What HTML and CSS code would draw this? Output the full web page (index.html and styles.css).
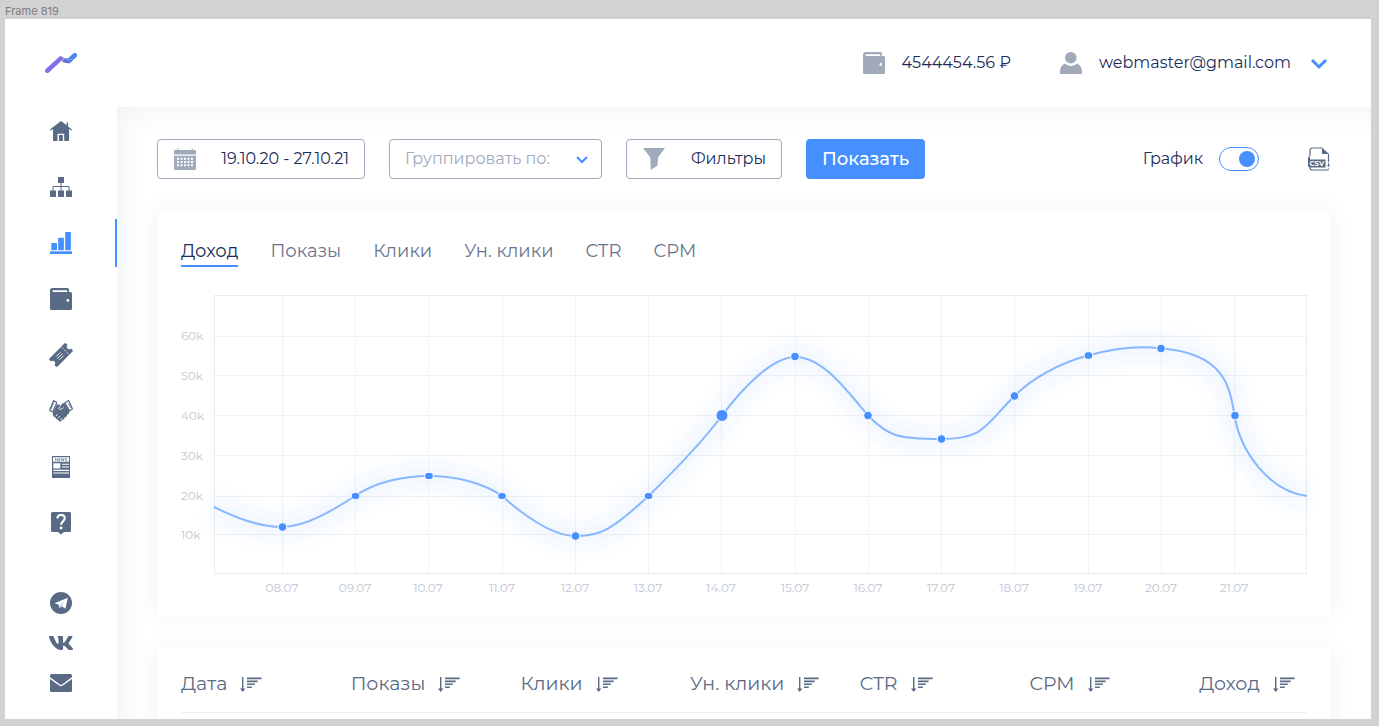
FILE: index.html
```
<!DOCTYPE html>
<html lang="ru">
<head>
<meta charset="utf-8">
<meta name="viewport" content="width=device-width, initial-scale=1">
<title>Статистика</title>
<link rel="stylesheet" href="styles.css">
</head>
<body class="canvas">
<svg class="sprite" aria-hidden="true">
  <symbol id="wallet" viewBox="0 0 24 24"><path fill-rule="evenodd" d="M3.500 1H18.500a1.500 1.500 0 0 1 1.500 1.500V5h1.500A1.500 1.500 0 0 1 23 6.500v15a1.500 1.500 0 0 1-1.500 1.500h-19A1.500 1.500 0 0 1 1 21.500v-18A2.500 2.500 0 0 1 3.500 1zM4.200 3.300a.8.8 0 0 0 0 1.600H18.300V3.300zM18.800 12a1.400 1.400 0 1 0 0 2.800 1.400 1.400 0 0 0 0-2.800z"/></symbol>
  <symbol id="sort" viewBox="0 0 22 15"><path d="M2.700 0v12" fill="none" stroke="currentColor" stroke-width="1.400"/><path d="M0 11.500h5.400L2.700 15z"/><path d="M7 .5h15l-.8 1.800H7zM7 3.600h11l-.8 1.600H7zM7 6.500h8.200l-.8 1.600H7zM7 9.400h5.300l-.8 1.500H7z"/></symbol>
</svg>
<div class="frame-label">Frame 819</div>
<div class="frame">
  <aside class="sidebar">
    <a class="logo" href="#" aria-label="Главная страница">
      <svg width="32" height="20" viewBox="0 0 32 20" fill="none" stroke-linecap="round">
        <path d="M15 3.300l5 2 4.500.2 3.500 1.300-3.600 3.600-5.600-.9-3.800-3z" fill="#5a70d8"/>
        <path d="M2.300 17.700 15.500 5.600" stroke="#8470e6" stroke-width="4.600"/>
        <path d="M24.500 7.200 29.800 2.300" stroke="#4b87e8" stroke-width="4.600"/>
        <path d="M17 8.300l2.800-4.200" stroke="#fff" stroke-width=".6"/>
        <path d="M20.500 6.200 27 6.500" stroke="#a9b7f0" stroke-width=".6"/>
      </svg>
    </a>
    <nav class="nav" aria-label="Разделы">
      <a class="nav-link" href="#" aria-label="Главная"><svg class="icon" viewBox="0 0 24 24"><path d="M12 2 1 10.500l.7 1L4 10v12h4.500v-7.300h6.700V22H20V10l2.300 1.500.7-1-3.900-3V3.500h-1.400v2.800zM10 16h3.800v6H10z"/></svg></a>
      <a class="nav-link" href="#" aria-label="Структура"><svg class="icon" viewBox="0 0 24 24"><path d="M9 2h6v6H9zM1 15.500h6V22H1zM9 15.500h6V22H9zM17 15.500h6V22h-6z"/><path d="M12 8v8M4 16v-4.500h16V16" fill="none" stroke="currentColor"/></svg></a>
      <a class="nav-link nav-link-active" href="#" aria-label="Статистика" aria-current="page"><svg class="icon" viewBox="0 0 24 24"><rect x="2.300" y="12" width="5.700" height="7.200" rx=".8"/><rect x="9.200" y="6.700" width="5.700" height="12.500" rx=".8"/><rect x="16.200" y="1" width="5.700" height="18.200" rx=".8"/><path d="M1 20.300h22V23H1z"/></svg></a>
      <a class="nav-link" href="#" aria-label="Кошелёк"><svg class="icon"><use href="#wallet"/></svg></a>
      <a class="nav-link" href="#" aria-label="Купоны"><svg class="icon" viewBox="0 0 24 24"><g transform="rotate(-45 12 12)"><path d="M0 6.300h22.500q1.200 0 1.200 1.200v2.100a2.400 2.400 0 0 0 0 4.800v2.100q0 1.200-1.200 1.200H1.500q-1.200 0-1.200-1.200v-2.100a2.400 2.400 0 0 0 0-4.800V7.500q0-1.200 1.200-1.200z"/><path d="M18 7v2m0 1.500v2.200m0 1.500v2.500M7.500 9.700h6M6.500 12h7.500M7.500 14.300h6" stroke="#fff" fill="none" stroke-width=".8"/></g></svg></a>
      <a class="nav-link" href="#" aria-label="Партнёры"><svg class="icon" viewBox="0 0 24 24"><path d="M8.300 4.400 12.500 3.500l3.200.7 4.900 8-.9 2.700-1.500.7-.5 2-1.900.7-.7 1.900-2 .5-.8 1.600-2 .1-2-2.100-1.300-.5-1-1.800-1.500-.4-.7-2L4 13.200z"/><path d="M4.500 1.600 8 3.500 3.500 13 .6 11.500zM15.900 3.800l3.700-2.300 3.800 8.200-2.800 2.200z" fill="#fff" stroke="currentColor" stroke-width="1.200" stroke-linejoin="round"/><path d="M4.900 3.600 1.900 10.300M19.500 4l2.400 5" fill="none" stroke="currentColor" stroke-width=".8"/><path d="M8 3.800 11.500 3.200 15.500 3.500 12.400 5.300 11.700 6 8 5.300z" fill="#fff"/><path d="M12.200 5.800 9.500 9.400l1 1 2.800-.7 1.500-1.300M7 17l1.500-2M9.200 19.200l1.700-2.200M11.500 21.200l1.500-2.200" fill="none" stroke="#fff" stroke-width=".8"/></svg></a>
      <a class="nav-link" href="#" aria-label="Новости"><svg class="icon" viewBox="0 0 24 24"><path d="M3 1h18v22H3z"/><path d="M4 2.300h16v4.500H4zM4.300 8.200h7v5.300h-7zM13 8.800h7v1h-7zM13 11.500h7v1h-7zM4.300 14.800H20v1.200H4.300zM4.300 17.400H20v1.200H4.300z" fill="#fff"/><path d="M6.500 6V3.400L8.700 6V3.400M11.300 3.500H9.800v2.300h1.500M9.800 4.600h1.300M12.200 3.400l.7 2.400.8-2.400.7 2.400.7-2.400M17.700 3.500h-1.500v1.100h1.400v1.200h-1.500" fill="none" stroke="currentColor" stroke-width=".6"/></svg></a>
      <a class="nav-link" href="#" aria-label="Помощь"><svg class="icon" viewBox="0 0 24 24"><path d="M3.500 1h17Q22 1 22 2.500v17q0 1.500-1.500 1.500H15l-3 2.500L9 21H3.500Q2 21 2 19.500v-17Q2 1 3.500 1z"/><path d="M8.400 7.500c0-4.700 7.400-4.700 7.400-.4 0 3-3.700 3.200-3.700 6.700" fill="none" stroke="#fff" stroke-width="2.100"/><circle cx="12.100" cy="17" r="1.400" fill="#fff"/></svg></a>
    </nav>
    <div class="social">
      <a class="social-link" href="#" aria-label="Telegram"><svg class="icon" viewBox="0 0 24 24"><circle cx="12" cy="12" r="11"/><path d="M5.500 12.300 18.800 6.700 16.400 17.700 12.500 15.200 10.400 17 9.700 13.700z" fill="#fff"/><path d="M10.400 17l.2-2.700L16 9.200l-3.500 6z" fill="#cfd5de"/></svg></a>
      <a class="social-link" href="#" aria-label="VK"><svg class="icon" viewBox="18 -14 540 540"><path d="M545 117.700c3.700-12.500 0-21.700-17.800-21.700h-58.900c-15 0-21.900 7.900-25.600 16.700 0 0-30 73.100-72.400 120.500-13.700 13.700-20 18.100-27.500 18.100-3.700 0-9.400-4.400-9.400-16.900V117.700c0-15-4.200-21.700-16.600-21.700h-92.600c-9.400 0-15 7-15 13.500 0 14.200 21.200 17.500 23.400 57.500v86.800c0 19-3.400 22.500-10.900 22.500-20 0-68.600-73.400-97.400-157.400-5.800-16.300-11.500-22.900-26.600-22.900H38.800c-16.800 0-20.200 7.900-20.200 16.700 0 15.600 20 93.100 93.100 195.500C160.400 378.100 229 416 291.400 416c37.500 0 42.100-8.400 42.100-22.900 0-66.800-3.400-73.100 15.400-73.100 8.700 0 23.700 4.400 58.700 38.100 40 40 46.600 57.900 69 57.900h58.900c16.800 0 25.300-8.400 20.400-25-11.200-34.900-86.900-106.700-90.300-111.500-8.700-11.200-6.200-16.200 0-26.200.1-.1 72-101.300 79.400-135.600z"/></svg></a>
      <a class="social-link" href="#" aria-label="Почта"><svg class="icon" viewBox="0 0 24 24"><rect x="1" y="3" width="22" height="18" rx="1.500"/><path d="M.5 6.700 10.500 14q1.500 1 3 0l10-7.300" fill="none" stroke="#fff" stroke-width="1.500"/></svg></a>
    </div>
  </aside>

  <header class="topbar">
    <div class="balance"><svg class="icon icon-light"><use href="#wallet"/></svg><span>4544454.56 ₽</span></div>
    <button class="account" type="button">
      <svg class="icon icon-light" viewBox="0 0 24 24"><circle cx="11.800" cy="6.700" r="5.800"/><path d="M1 23v-2.500c0-4 2-6.700 5-8 3.200 3.300 8.600 3.300 11.800 0 3.200 1.300 5.200 4 5.200 8V23z"/></svg>
      <span>webmaster@gmail.com</span>
      <svg class="icon chevron" viewBox="0 0 24 24"><path d="M5 9l7 7 7-7" stroke-width="3"/></svg>
    </button>
  </header>

  <main class="content">
    <form class="filters">
      <button class="field field-date" type="button">
        <svg class="icon icon-light" viewBox="0 0 24 24"><path d="M4 1h1.500v2H4zM18.500 1H20v2h-1.500z" opacity=".6"/><path fill-rule="evenodd" d="M2 3h20q1 0 1 1v3.500H1V4q0-1 1-1zM1 8.700h22v12.800q0 1.500-1.500 1.500h-19Q1 23 1 21.500zM4 10.700v2h2v-2zm3.500 0v2h2v-2zm3.500 0v2h2v-2zm3.500 0v2h2v-2zm3.500 0v2h2v-2zM4 14v2h2v-2zm3.500 0v2h2v-2zm3.500 0v2h2v-2zm3.500 0v2h2v-2zm3.500 0v2h2v-2zM4 17.300v2h2v-2zm3.500 0v2h2v-2zm3.500 0v2h2v-2zm3.500 0v2h2v-2zm3.500 0v2h2v-2z"/></svg>
        <span>19.10.20 - 27.10.21</span>
      </button>
      <div class="select-wrap">
        <select class="field field-select" aria-label="Группировать по"><option>Группировать по:</option></select>
        <svg class="select-arrow chevron" width="12" height="8" viewBox="0 0 12 8"><path d="M1 1l5 5 5-5" stroke-width="2"/></svg>
      </div>
      <button class="field field-filter" type="button">
        <svg class="icon icon-light" viewBox="0 0 24 24"><path d="M1 1h22l-7 9.500-.5 8L8.700 23l-.4-12.500z"/></svg>
        <span>Фильтры</span>
      </button>
      <button class="submit" type="submit">Показать</button>
      <label class="switch">График<input class="switch-input" type="checkbox" role="switch" checked></label>
      <button class="export" type="button" aria-label="Скачать CSV">
        <svg class="icon" viewBox="0 0 24 24"><path d="M3 9V3.500Q3 1 5.500 1H15M21.500 7v8M3 19v1.500Q3 23 5.500 23H20q1.500 0 1.500-1.500" fill="none" stroke="currentColor" stroke-width="1.200"/><path d="M15 .5 22 7h-7zM1 10.500l2-1.500v3.500h15.500V20.500H3q-2 0-2-2z"/><path d="M21 16h1v2.300h1.200L21.500 20l-1.700-1.700H21z"/><text class="csv-text" x="9.800" y="19.300" text-anchor="middle">CSV</text></svg>
      </button>
    </form>

    <section class="card chart-card">
      <div class="tabs" role="tablist">
        <button class="tab tab-active" type="button" role="tab" aria-selected="true">Доход</button>
        <button class="tab" type="button" role="tab">Показы</button>
        <button class="tab" type="button" role="tab">Клики</button>
        <button class="tab" type="button" role="tab">Ун. клики</button>
        <button class="tab" type="button" role="tab">CTR</button>
        <button class="tab" type="button" role="tab">CPM</button>
      </div>
      <svg class="chart" viewBox="181 283 1126 309" role="img" aria-label="Доход по дням">
        <defs>
          <filter id="glow" x="-10%" y="-30%" width="120%" height="160%"><feGaussianBlur stdDeviation="8"/></filter>
          <path id="income" d="M214 507C236 518 260 527 282 527C306 527 335 509 355 496C375 482 403 476 429 476C458 476 485 484 502 496C522 514 552 536 575.500 536C600 536.500 613 529 648.500 496C672 473 704 440 722 415.500C742 389 772 357 795 357C822 357 845 388 868 415.500C888 436 897 439 941.500 439C985 439 985 425 1014.500 396C1032 378 1060 363 1088 355.500C1112 349 1136 345 1161 348.500C1225 353 1230 388 1234.500 415.500C1240 450 1268 491 1307 496"/>
        </defs>
        <path class="grid" d="M214 336.500H1306M214 375.500H1306M214 415.500H1306M214 455.500H1306M214 496.500H1306M214 534.500H1306M282.500 295V574M355.500 295V574M428.500 295V574M502.500 295V574M575.500 295V574M648.500 295V574M721.500 295V574M795.500 295V574M868.500 295V574M941.500 295V574M1014.500 295V574M1088.500 295V574M1161.500 295V574M1234.500 295V574"/>
        <rect class="plot" x="214.500" y="295.500" width="1092" height="278"/>
        <g filter="url(#glow)"><use class="glow" href="#income"/></g>
        <use class="line" href="#income"/>
        <g class="points">
          <circle cx="282.500" cy="527" r="4.300"/><ellipse cx="355.500" cy="496" rx="4.300" ry="3.500"/><ellipse cx="429" cy="476" rx="4.300" ry="3.700"/><ellipse cx="502" cy="496" rx="4.300" ry="3.500"/><circle cx="575.500" cy="536" r="4.300"/><ellipse cx="648.500" cy="496" rx="4.300" ry="3.500"/><circle cx="722" cy="415.500" r="6"/><circle cx="795" cy="356.500" r="4.300"/><circle cx="868" cy="415.500" r="4.300"/><circle cx="941.500" cy="439" r="4.300"/><circle cx="1014.500" cy="396" r="4.300"/><ellipse cx="1088.500" cy="355.500" rx="4.300" ry="3.800"/><circle cx="1161" cy="348.500" r="4.300"/><circle cx="1235" cy="415.500" r="4.300"/>
        </g>
        <g class="axis">
          <text x="181" y="340">60k</text><text x="181" y="380">50k</text><text x="181" y="420">40k</text><text x="181" y="460">30k</text><text x="181" y="500">20k</text><text x="181" y="539">10k</text>
        </g>
        <g class="axis" text-anchor="middle">
          <text x="282" y="592">08.07</text><text x="355" y="592">09.07</text><text x="428" y="592">10.07</text><text x="502" y="592">11.07</text><text x="575" y="592">12.07</text><text x="648" y="592">13.07</text><text x="721" y="592">14.07</text><text x="795" y="592">15.07</text><text x="868" y="592">16.07</text><text x="941" y="592">17.07</text><text x="1014" y="592">18.07</text><text x="1088" y="592">19.07</text><text x="1161" y="592">20.07</text><text x="1234" y="592">21.07</text>
        </g>
      </svg>
    </section>

    <section class="card table-card">
      <table class="stats">
        <thead><tr>
          <th scope="col"><button class="sort" type="button">Дата<svg class="sort-icon"><use href="#sort"/></svg></button></th>
          <th scope="col"><button class="sort" type="button">Показы<svg class="sort-icon"><use href="#sort"/></svg></button></th>
          <th scope="col"><button class="sort" type="button">Клики<svg class="sort-icon"><use href="#sort"/></svg></button></th>
          <th scope="col"><button class="sort" type="button">Ун. клики<svg class="sort-icon"><use href="#sort"/></svg></button></th>
          <th scope="col"><button class="sort" type="button">CTR<svg class="sort-icon"><use href="#sort"/></svg></button></th>
          <th scope="col"><button class="sort" type="button">CPM<svg class="sort-icon"><use href="#sort"/></svg></button></th>
          <th scope="col"><button class="sort" type="button">Доход<svg class="sort-icon"><use href="#sort"/></svg></button></th>
        </tr></thead>
      </table>
    </section>
  </main>
</div>
</body>
</html>
```
FILE: styles.css
```
*, *::before, *::after { box-sizing: border-box; }

.canvas {
  margin: 0;
  height: 100vh;
  display: grid;
  grid-template-rows: 19px minmax(0, 1fr);
  padding: 0 8px 7px 5px;
  overflow: hidden;
  background: #d2d2d2;
  color: #1b2d5a;
  font: 400 16px/24px Montserrat, Inter, sans-serif;
}

button, select, input { font: inherit; color: inherit; margin: 0; }
button { border: 0; padding: 0; background: none; cursor: pointer; }
svg { display: block; flex: none; fill: currentColor; }

.sprite { position: absolute; width: 0; height: 0; }
.frame-label { color: #7d7d7d; font: 11px/22px Inter, sans-serif; }

.frame {
  display: grid;
  grid-template: 88px minmax(0, 1fr) / 112px minmax(0, 1fr);
  overflow: hidden;
  background: #fff;
}

.icon { width: 24px; height: 24px; }
.icon-light { color: #a0aabb; }
.chevron { color: #468fff; fill: none; stroke: currentColor; }

/* Sidebar */
.sidebar {
  grid-row: 1 / 3;
  display: flex;
  flex-direction: column;
  color: #596a85;
}
.sidebar a { display: flex; align-items: center; justify-content: center; color: inherit; }
.logo { height: 88px; }
.nav { display: grid; gap: 8px; }
.nav-link { height: 48px; border: solid transparent; border-width: 0 2px; }
.sidebar .nav-link-active { color: #468fff; border-right-color: #468fff; }
.social { margin-top: auto; padding-bottom: 16px; }
.social-link { height: 40px; }

/* Top bar */
.topbar {
  display: flex;
  align-items: center;
  justify-content: flex-end;
  gap: 48px;
  padding: 0 40px;
}
.balance, .account { display: flex; align-items: center; gap: 16px; }

/* Content */
.content {
  display: flex;
  flex-direction: column;
  gap: 32px;
  padding: 32px 40px;
  overflow: hidden;
  box-shadow: inset 16px 16px 32px -16px #1f305514;
}
.content > * { flex: none; }

.filters { display: flex; align-items: center; gap: 24px; }
.field {
  height: 40px;
  padding: 0 15px;
  border: 1px solid #a0aabb;
  border-radius: 4px;
  background: #fff;
}
.field-date, .field-filter { display: flex; align-items: center; justify-content: space-between; }
.field-date { width: 208px; }
.field-filter { width: 156px; }
.select-wrap { position: relative; width: 213px; }
.field-select { appearance: none; width: 100%; color: #a0aabb; }
.select-arrow { position: absolute; right: 14px; top: 17px; pointer-events: none; }
.submit {
  height: 40px;
  padding: 0 16px;
  border-radius: 4px;
  background: #468fff;
  color: #fff;
  font-size: 18px;
  font-weight: 500;
}
.switch { display: flex; align-items: center; gap: 16px; margin-left: auto; }
.switch-input {
  appearance: none;
  display: flex;
  align-items: center;
  justify-content: flex-end;
  width: 40px;
  height: 24px;
  padding: 3px;
  border: 1px solid #468fff;
  border-radius: 12px;
  background: #fff;
}
.switch-input::before { content: ""; width: 16px; height: 16px; border-radius: 50%; background: #468fff; }
.switch-input:not(:checked) { justify-content: flex-start; }
.export { margin-left: 24px; color: #596a85; }
.csv-text { fill: #fff; font-size: 7px; font-weight: 700; }

.card { border-radius: 4px; background: #fff; box-shadow: 0 0 24px #1f305510; }
.chart-card { padding: 24px; }
.tabs { display: flex; gap: 32px; margin-bottom: 16px; }
.tab {
  padding-top: 2px;
  border-bottom: 2px solid transparent;
  color: #66758e;
  font-size: 18px;
  line-height: 28px;
}
.tab-active { border-color: #468fff; color: #1b2d5a; }

.chart { width: 100%; height: auto; overflow: visible; }
.grid, .plot { fill: none; stroke: #f1f2f3; }
.plot { stroke: #eaebec; }
.line { fill: none; stroke: #87b7ff; stroke-width: 2; }
.glow { fill: none; stroke: #468fff; stroke-width: 24; opacity: .07; }
.points { fill: #468fff; stroke: #fff; }
.axis { fill: #bfc6d1; font-size: 12px; }

.table-card { padding: 0 24px 24px; }
.stats { width: 100%; table-layout: fixed; border-collapse: collapse; }
.stats th { width: 15.07%; padding: 24px 0 16px; border-bottom: 1px solid #ececee; text-align: left; }
.stats th:last-child { width: auto; }
.sort { display: flex; align-items: center; gap: 13px; color: #596a85; font-size: 19px; font-weight: 400; white-space: nowrap; }
.sort-icon { width: 22px; height: 15px; }
```
